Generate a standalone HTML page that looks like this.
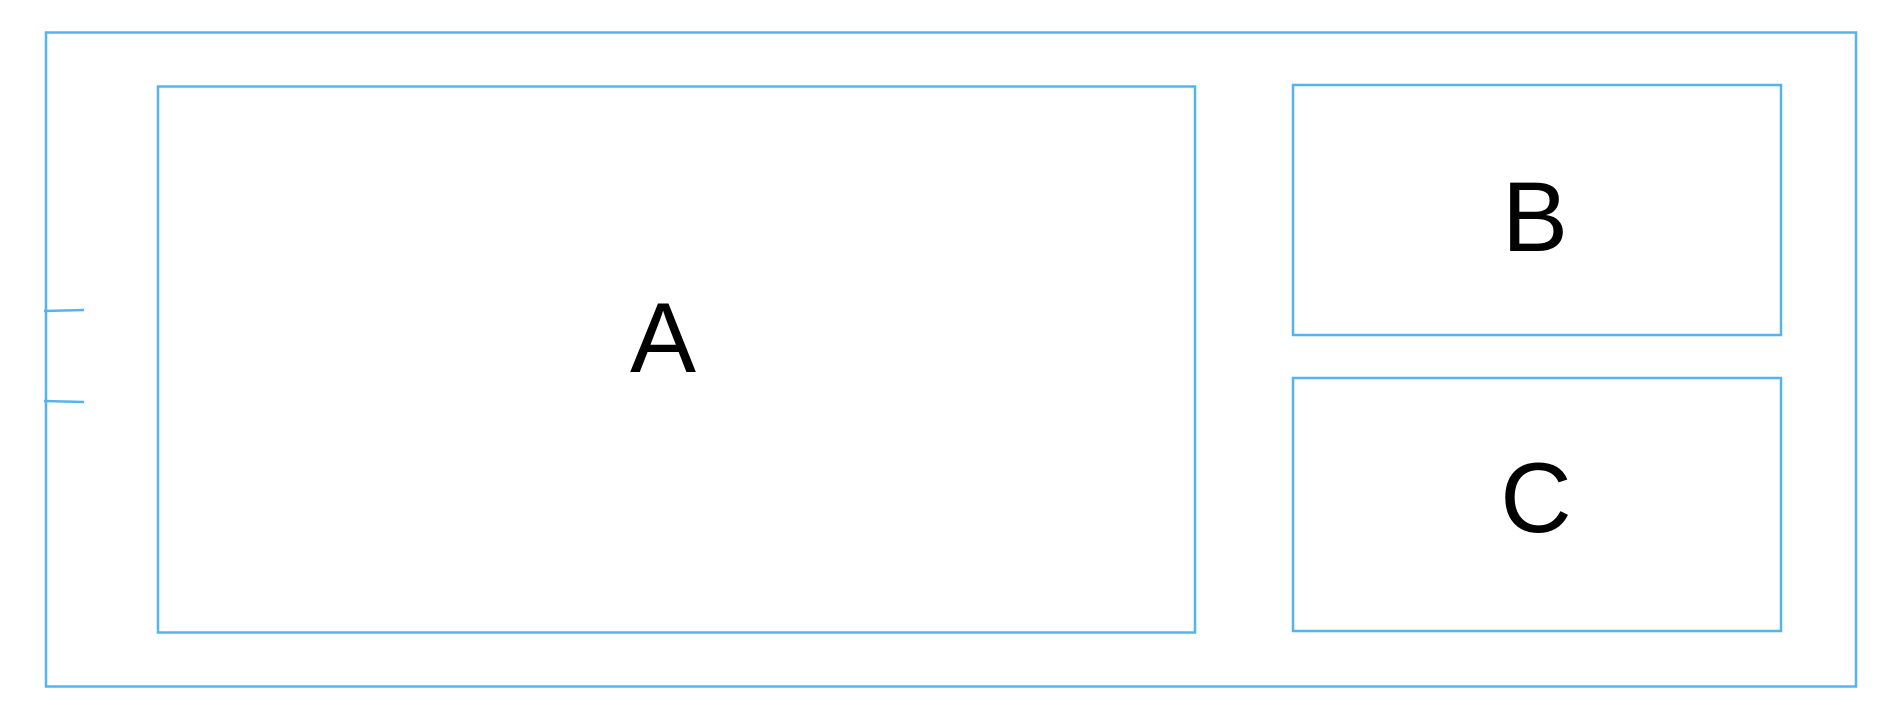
<!DOCTYPE html>
<html><head><meta charset="utf-8"><style>
html,body{margin:0;padding:0;background:#fff;width:1904px;height:720px;overflow:hidden}
</style></head><body>
<svg width="1904" height="720" xmlns="http://www.w3.org/2000/svg">
<g fill="none" stroke="#55b4ee" stroke-width="2.5">
<rect x="46" y="32.5" width="1810" height="654"/>
<rect x="158" y="86.5" width="1037" height="546"/>
<rect x="1293" y="85" width="488" height="250"/>
<rect x="1293" y="378" width="488" height="253"/>
<line x1="44" y1="311" x2="84" y2="310"/>
<line x1="44" y1="401" x2="84" y2="402"/>
</g>
<g font-family="Liberation Sans, sans-serif" font-size="99" fill="#000" text-anchor="middle">
<text x="663" y="372">A</text>
<text x="1535" y="251">B</text>
<text x="1536" y="532">C</text>
</g>
</svg>
</body></html>
